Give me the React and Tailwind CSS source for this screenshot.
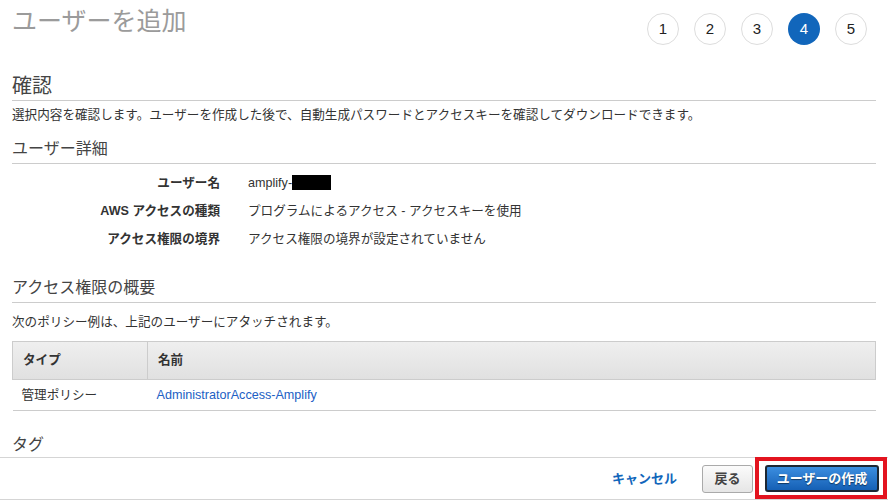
import React from 'react';

const FONT = { fontFamily: '"Liberation Sans", Arial, "Noto Sans CJK JP", sans-serif' };

function Steps({ current }) {
  return (
    <div className="mr-[21px] mt-[13px] flex gap-[15px]">
      {[1, 2, 3, 4, 5].map((n) =>
        n === current ? (
          <div
            key={n}
            className="flex h-[32px] w-[32px] items-center justify-center rounded-full bg-[#1166bb] text-[15px] text-white"
          >
            {n}
          </div>
        ) : (
          <div
            key={n}
            className="flex h-[32px] w-[32px] items-center justify-center rounded-full border border-[#dddddd] bg-white text-[15px] text-[#222]"
          >
            {n}
          </div>
        )
      )}
    </div>
  );
}

function SectionHeading({ children, className }) {
  return (
    <div className={'border-b border-[#cccccc] ' + className}>
      {children}
    </div>
  );
}

function DetailRow({ label, children }) {
  return (
    <div className="flex h-[28px] items-center text-[12.6px]">
      <div className="w-[208px] text-right font-bold text-[#333]">{label}</div>
      <div className="ml-[28px] flex items-center text-[#333]">{children}</div>
    </div>
  );
}

export default function App() {
  return (
    <div
      className="relative flex h-[500px] w-[888px] flex-col overflow-hidden bg-white text-[#333]"
      style={FONT}
    >
      <div className="min-h-0 flex-1 overflow-hidden">
        {/* header */}
        <div className="flex h-[56px] items-start justify-between">
          <h1 className="ml-[12px] mt-[5px] text-[25px] leading-[32px] text-[#9b9b9b]">
            ユーザーを追加
          </h1>
          <Steps current={4} />
        </div>

        <div className="mx-[12px]">
          <SectionHeading className="mt-[16px] h-[29px] text-[20px] leading-[28px] text-[#444]">
            確認
          </SectionHeading>
          <p className="mt-[5px] text-[12.6px] leading-[18px]">
            選択内容を確認します。ユーザーを作成した後で、自動生成パスワードとアクセスキーを確認してダウンロードできます。
          </p>

          <SectionHeading className="mt-[13px] h-[27px] text-[16px] leading-[24px] text-[#444]">
            ユーザー詳細
          </SectionHeading>
          <div className="mt-[5px]">
            <DetailRow label="ユーザー名">
              <span>amplify-</span>
              <span className="inline-block h-[15px] w-[39px] bg-black" />
            </DetailRow>
            <DetailRow label="AWS アクセスの種類">
              プログラムによるアクセス - アクセスキーを使用
            </DetailRow>
            <DetailRow label="アクセス権限の境界">
              アクセス権限の境界が設定されていません
            </DetailRow>
          </div>

          <SectionHeading className="mt-[23px] h-[27px] text-[16px] leading-[24px] text-[#444]">
            アクセス権限の概要
          </SectionHeading>
          <p className="mt-[10px] text-[12.6px] leading-[18px]">
            次のポリシー例は、上記のユーザーにアタッチされます。
          </p>

          <table className="mt-[10px] w-full border-collapse text-[12.6px]">
            <thead>
              <tr className="h-[38px] bg-gradient-to-b from-[#efefef] to-[#e0e0e0]">
                <th className="w-[135px] border border-[#cccccc] pl-[10px] text-left font-bold text-[#333]">
                  タイプ
                </th>
                <th className="border border-[#cccccc] pl-[10px] text-left font-bold text-[#333]">
                  名前
                </th>
              </tr>
            </thead>
            <tbody>
              <tr className="h-[31px] border-b border-[#cccccc]">
                <td className="pl-[9px]">管理ポリシー</td>
                <td className="pl-[9px] text-[#2160c4]">AdministratorAccess-Amplify</td>
              </tr>
            </tbody>
          </table>

          <SectionHeading className="mt-[22px] h-[27px] text-[16px] leading-[24px] text-[#444]">
            タグ
          </SectionHeading>
        </div>
      </div>

      {/* footer */}
      <div className="flex h-[43px] shrink-0 items-center justify-end border-y border-[#d5d5d5] bg-white pr-[9px]">
        <a className="text-[13px] font-bold text-[#1166bb]">キャンセル</a>
        <button className="ml-[25px] h-[28px] w-[51px] rounded-[3px] border border-[#aaaaaa] bg-gradient-to-b from-[#fbfbfb] to-[#e6e6e6] text-[13px] font-bold text-[#444]">
          戻る
        </button>
        <div className="relative ml-[12px]">
          <button className="h-[27px] w-[114px] rounded-[3px] border-2 border-[#1c2733] bg-gradient-to-b from-[#3b8ee0] to-[#1560b5] text-[13px] font-bold text-white [text-shadow:0_1px_1px_rgba(0,0,0,0.5)]">
            ユーザーの作成
          </button>
          <div className="pointer-events-none absolute -bottom-[7px] -left-[10px] -right-[8px] -top-[8px] border-[4px] border-[#e3141f]" />
        </div>
      </div>
    </div>
  );
}
